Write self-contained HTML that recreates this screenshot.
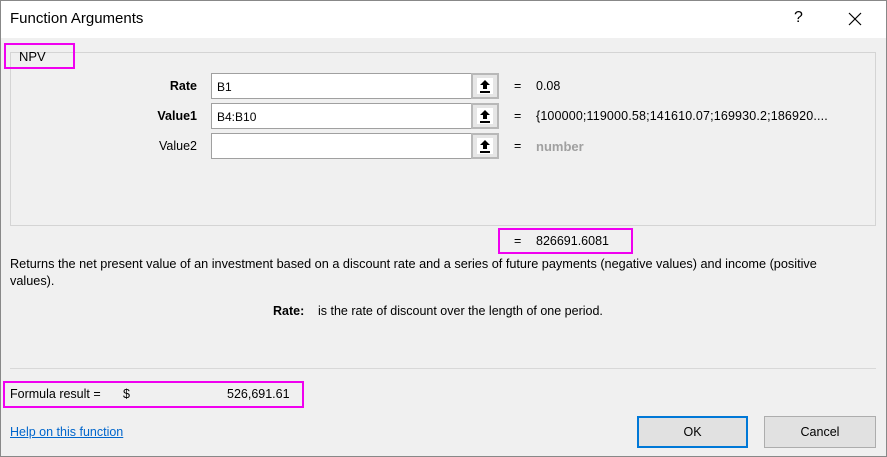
<!DOCTYPE html>
<html><head><style>
*{margin:0;padding:0;box-sizing:border-box}
body{width:887px;height:457px;background:#f0f0f0;font-family:"Liberation Sans",sans-serif;font-size:12.5px;color:#000;position:relative;overflow:hidden}
.a{position:absolute;white-space:nowrap}
.lb{position:absolute;right:690px;white-space:nowrap}
.inp{position:absolute;left:211px;width:261px;height:26px;background:#fff;border:1px solid #a0a0a0;padding:6px 0 0 5px;font-size:12px}
.btn{position:absolute;left:471px;width:28px;height:26px;border:2px solid #b8b8b8;background:#e6e6e6}
.btn svg{position:absolute;left:4px;top:3px}
.mg{position:absolute;border:2px solid #f000f0}
</style></head><body>
<div class="a" style="left:0;top:0;width:887px;height:38px;background:#fff"></div>
<div class="a" style="left:0;top:0;width:887px;height:457px;border:1px solid #888"></div>
<div class="a" style="left:10px;top:10px;font-size:15px">Function Arguments</div>
<div class="a" style="left:794px;top:9px;font-size:16px">?</div>
<svg class="a" style="left:848px;top:12px" width="14" height="14"><path d="M1 1L13 13M13 1L1 13" stroke="#000" stroke-width="1.2"/></svg>
<div class="a" style="left:10px;top:52px;width:866px;height:174px;border:1px solid #d4d4d4"></div>
<div class="mg" style="left:4px;top:43px;width:71px;height:26px"></div>
<div class="a" style="left:19px;top:49px;font-size:13px">NPV</div>
<div class="lb" style="top:79px;font-weight:bold">Rate</div>
<div class="lb" style="top:109px;font-weight:bold">Value1</div>
<div class="lb" style="top:139px">Value2</div>
<div class="inp" style="top:73px">B1</div>
<div class="inp" style="top:103px">B4:B10</div>
<div class="inp" style="top:133px"></div>
<div class="btn" style="top:73px"><svg width="16" height="16" style="background:#fff"><path d="M8 2L3 7H6V11H10V7H13Z" fill="#000"/><rect x="3" y="13" width="10" height="2" fill="#000"/></svg></div>
<div class="btn" style="top:103px"><svg width="16" height="16" style="background:#fff"><path d="M8 2L3 7H6V11H10V7H13Z" fill="#000"/><rect x="3" y="13" width="10" height="2" fill="#000"/></svg></div>
<div class="btn" style="top:133px"><svg width="16" height="16" style="background:#fff"><path d="M8 2L3 7H6V11H10V7H13Z" fill="#000"/><rect x="3" y="13" width="10" height="2" fill="#000"/></svg></div>
<div class="a" style="left:514px;top:79px">=</div>
<div class="a" style="left:514px;top:109px">=</div>
<div class="a" style="left:514px;top:139px">=</div>
<div class="a" style="left:536px;top:79px">0.08</div>
<div class="a" style="left:536px;top:109px;letter-spacing:0.15px">{100000;119000.58;141610.07;169930.2;186920....</div>
<div class="a" style="left:536px;top:139px;color:#a0a0a0;font-weight:bold;font-size:13px">number</div>
<div class="mg" style="left:498px;top:228px;width:135px;height:26px"></div>
<div class="a" style="left:514px;top:234px">=</div>
<div class="a" style="left:536px;top:234px">826691.6081</div>
<div class="a" style="left:10px;top:256px;line-height:17px;white-space:normal;width:850px;font-size:12.7px">Returns the net present value of an investment based on a discount rate and a series of future payments (negative values) and income (positive values).</div>
<div class="a" style="left:273px;top:304px;font-weight:bold">Rate:</div>
<div class="a" style="left:318px;top:304px">is the rate of discount over the length of one period.</div>
<div class="a" style="left:10px;top:368px;width:866px;height:1px;background:#d8d8d8"></div>
<div class="mg" style="left:3px;top:381px;width:301px;height:27px"></div>
<div class="a" style="left:10px;top:387px">Formula result =</div>
<div class="a" style="left:123px;top:387px">$</div>
<div class="a" style="left:227px;top:387px">526,691.61</div>
<div class="a" style="left:10px;top:425px;color:#0066cc;text-decoration:underline">Help on this function</div>
<div class="a" style="left:637px;top:416px;width:111px;height:32px;background:#e1e1e1;border:2px solid #0078d7;text-align:center;line-height:28px">OK</div>
<div class="a" style="left:764px;top:416px;width:112px;height:32px;background:#e1e1e1;border:1px solid #adadad;text-align:center;line-height:30px">Cancel</div>
</body></html>
